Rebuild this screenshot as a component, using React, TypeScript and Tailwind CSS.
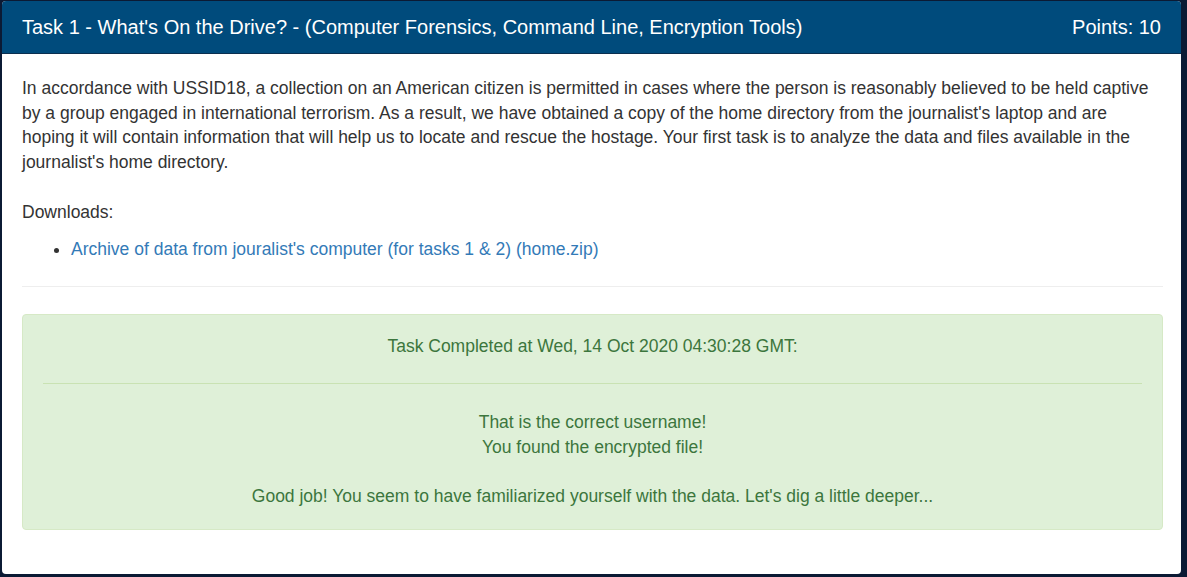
export default function App() {
  return (
    <div className="min-h-screen bg-[#0b1a34] pt-px pl-[2px] font-['Liberation_Sans',Arial,sans-serif]">
      <div className="w-[1179px] overflow-hidden rounded-[4px] bg-white">
        <div className="flex h-[53px] items-center justify-between border-b border-[#0b2f4f] bg-[#004b7c] px-5 text-[20px] text-white">
          <span>Task 1 - What's On the Drive? - (Computer Forensics, Command Line, Encryption Tools)</span>
          <span>Points: 10</span>
        </div>
        <div className="pl-5 pr-[18px] pt-[22px] pb-[44px] text-[17.5px] leading-[24.6px] text-[#333]">
          <p>
            In accordance with USSID18, a collection on an American citizen is permitted in cases where the person is
            reasonably believed to be held captive by a group engaged in international terrorism. As a result, we have
            obtained a copy of the home directory from the journalist's laptop and are hoping it will contain information
            that will help us to locate and rescue the hostage. Your first task is to analyze the data and files available
            in the journalist's home directory.
          </p>
          <p className="mt-[26px]">Downloads:</p>
          <ul className="mt-3 list-disc pl-[49px]">
            <li>
              <a href="#" className="text-[#337ab7]">
                Archive of data from jouralist's computer (for tasks 1 &amp; 2) (home.zip)
              </a>
            </li>
          </ul>
          <hr className="mt-[24px] mb-[27px] border-[#eee]" />
          <div className="rounded-[4px] border border-[#d6e9c6] bg-[#dff0d8] px-5 pt-[19px] pb-5 text-center text-[#3c763d]">
            <p>Task Completed at Wed, 14 Oct 2020 04:30:28 GMT:</p>
            <hr className="mt-[25px] mb-[26px] border-[#c9e2b3]" />
            <p>
              That is the correct username!
              <br />
              You found the encrypted file!
              <br />
              <br />
              Good job! You seem to have familiarized yourself with the data. Let's dig a little deeper...
            </p>
          </div>
        </div>
      </div>
    </div>
  );
}
